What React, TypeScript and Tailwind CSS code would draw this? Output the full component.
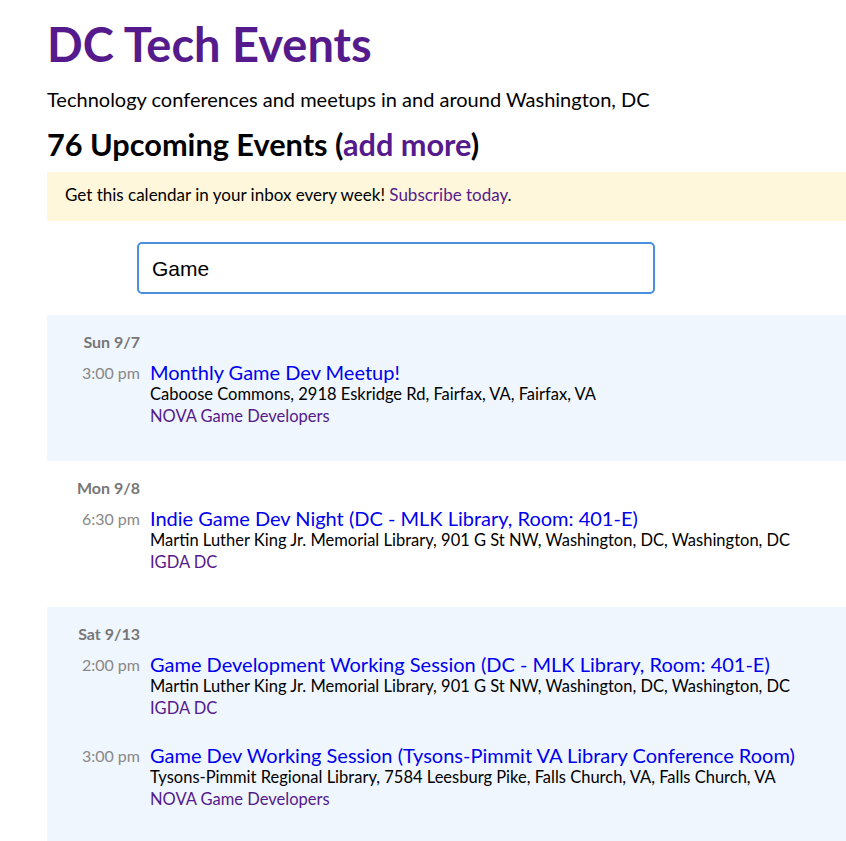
import React from "react"

// 행사 데이터
type Ev = { time: string; title: string; where: string; group: string }
type Day = { label: string; events: Ev[] }

const days: Day[] = [
  {
    label: "Sun 9/7",
    events: [
      {
        time: "3:00 pm",
        title: "Monthly Game Dev Meetup!",
        where: "Caboose Commons, 2918 Eskridge Rd, Fairfax, VA, Fairfax, VA",
        group: "NOVA Game Developers",
      },
    ],
  },
  {
    label: "Mon 9/8",
    events: [
      {
        time: "6:30 pm",
        title: "Indie Game Dev Night (DC - MLK Library, Room: 401-E)",
        where: "Martin Luther King Jr. Memorial Library, 901 G St NW, Washington, DC, Washington, DC",
        group: "IGDA DC",
      },
    ],
  },
  {
    label: "Sat 9/13",
    events: [
      {
        time: "2:00 pm",
        title: "Game Development Working Session (DC - MLK Library, Room: 401-E)",
        where: "Martin Luther King Jr. Memorial Library, 901 G St NW, Washington, DC, Washington, DC",
        group: "IGDA DC",
      },
      {
        time: "3:00 pm",
        title: "Game Dev Working Session (Tysons-Pimmit VA Library Conference Room)",
        where: "Tysons-Pimmit Regional Library, 7584 Leesburg Pike, Falls Church, VA, Falls Church, VA",
        group: "NOVA Game Developers",
      },
    ],
  },
]

function DaySection({ day, shaded }: { day: Day; shaded: boolean }) {
  return (
    <div className={`pt-4 pb-[34px] ${shaded ? "bg-[#eff6fd]" : "bg-white"}`}>
      <div className="flex mb-2">
        <div className="w-[103px] pr-[10px] text-right text-[16px] leading-[22px] font-bold text-[#777]">
          {day.label}
        </div>
      </div>
      <div className="flex flex-col gap-[25px]">
        {day.events.map((ev) => (
          <div key={ev.title} className="flex">
            <div className="w-[103px] shrink-0 pr-[10px] pt-[1px] text-right text-[16px] leading-[22px] text-[#888]">
              {ev.time}
            </div>
            <div>
              <a href="#" className="block text-[20px] leading-[22px] text-[#0000ee]">
                {ev.title}
              </a>
              <div className="text-[16.5px] leading-[22px] text-black">{ev.where}</div>
              <a href="#" className="block text-[16.5px] leading-[22px] text-[#551a8b]">
                {ev.group}
              </a>
            </div>
          </div>
        ))}
      </div>
    </div>
  )
}

export default function App() {
  return (
    <div className="min-h-screen bg-white pl-[47px] font-['Lato',sans-serif] text-black">
      <h1 className="pt-[16px] text-[47px] leading-[1.2] font-bold text-[#551a8b]">DC Tech Events</h1>
      <p className="mt-[15px] text-[20px] leading-[1.2]">
        Technology conferences and meetups in and around Washington, DC
      </p>
      <h2 className="mt-[16px] text-[30.7px] leading-[1.2] font-bold">
        76 Upcoming Events (<a href="#" className="text-[#551a8b]">add more</a>)
      </h2>
      <div className="mt-[8px] bg-[#fef7dc] pl-[18px] pt-[11px] pb-[14px] text-[17px] leading-[24px]">
        Get this calendar in your inbox every week!{" "}
        <a href="#" className="text-[#551a8b]">Subscribe today</a>.
      </div>
      <div className="mt-[21px] mb-[21px] ml-[90px]">
        <input
          type="text"
          defaultValue="Game"
          className="h-[52px] w-[518px] rounded-[5px] border-2 border-[#4a8fdd] px-[13px] pt-[2px] text-[21px] font-['Liberation_Sans',Arial,sans-serif] text-black outline-none"
        />
      </div>
      {days.map((d, i) => (
        <DaySection key={d.label} day={d} shaded={i % 2 === 0} />
      ))}
    </div>
  )
}
